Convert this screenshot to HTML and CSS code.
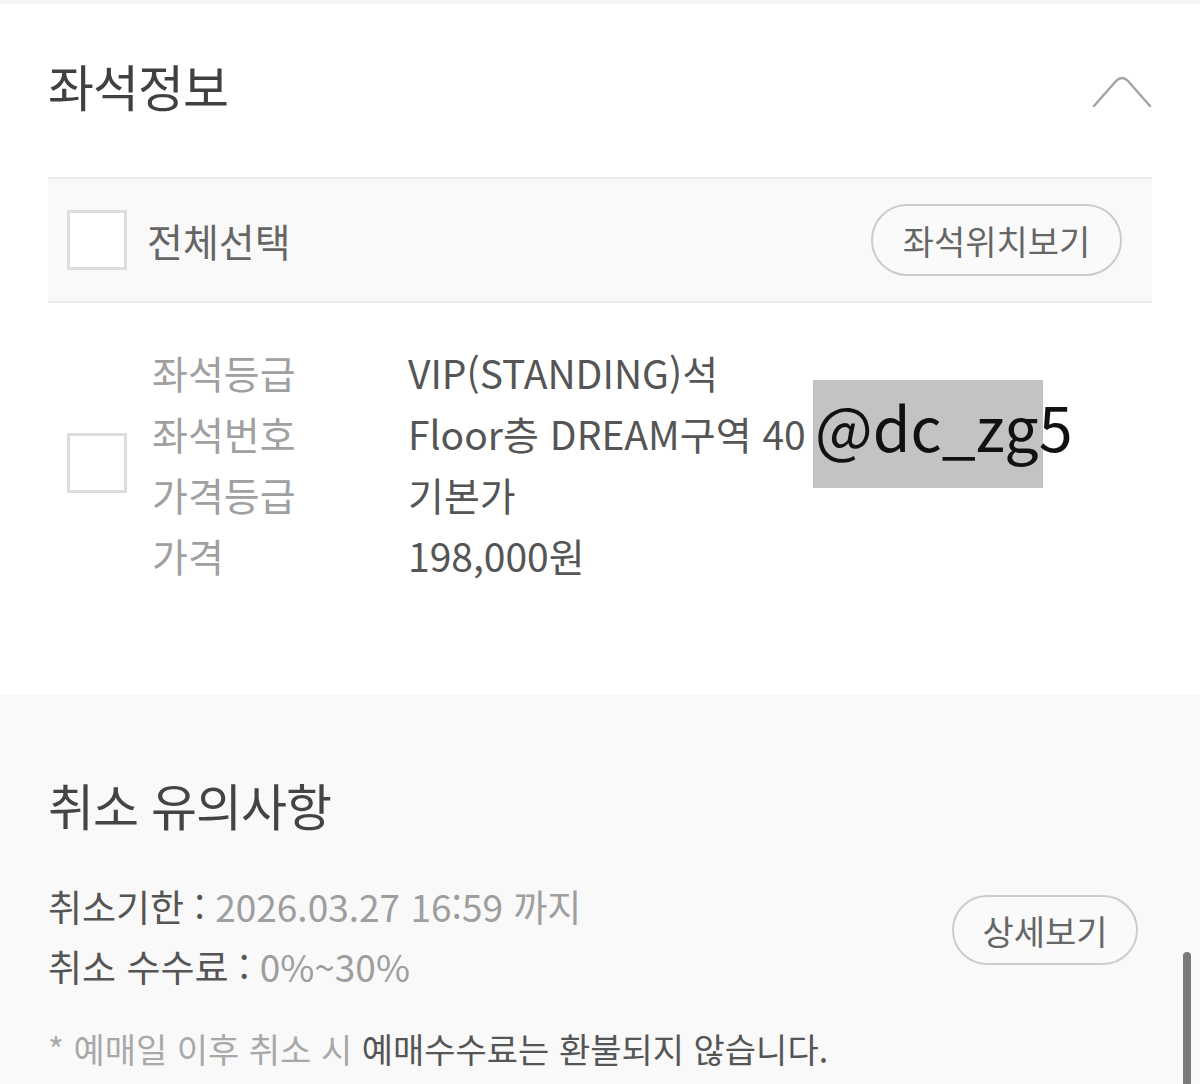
FILE: index.html
```html
<!DOCTYPE html>
<html lang="ko">
<head>
<meta charset="utf-8">
<link rel="stylesheet" href="styles.css">
</head>
<body>
<div class="page">
  <div class="topstrip"></div>
  <section class="seat">
    <div class="seat-head">
      <h2 class="title">좌석정보</h2>
      <svg class="chev" width="60" height="34" viewBox="0 0 60 34"><path d="M2 31 L24 6 Q30 0 36 6 L58 31" fill="none" stroke="#a3a3a3" stroke-width="2.4" stroke-linecap="round" stroke-linejoin="round"/></svg>
    </div>
    <div class="table-head">
      <div class="check-label">
        <span class="box"></span>
        <span class="all">전체선택</span>
      </div>
      <button class="pill pill-seat">좌석위치보기</button>
    </div>
    <div class="seat-row">
      <span class="box"></span>
      <dl class="info">
        <div class="line"><dt>좌석등급</dt><dd>VIP(STANDING)석</dd></div>
        <div class="line"><dt>좌석번호</dt><dd>Floor층 DREAM구역 40</dd></div>
        <div class="line"><dt>가격등급</dt><dd>기본가</dd></div>
        <div class="line"><dt>가격</dt><dd>198,000원</dd></div>
      </dl>
    </div>
    <div class="mark"><span>@dc_zg5</span></div>
  </section>
  <section class="cancel">
    <h2 class="title">취소 유의사항</h2>
    <div class="cancel-body">
      <div class="terms">
        <p class="term"><span class="k">취소기한 :</span> <span class="v">2026.03.27 16:59 까지</span></p>
        <p class="term"><span class="k">취소 수수료 :</span> <span class="v">0%~30%</span></p>
      </div>
      <button class="pill pill-detail">상세보기</button>
    </div>
    <p class="note"><span class="light">* 예매일 이후 취소 시 </span>예매수수료는 환불되지 않습니다.</p>
  </section>
  <div class="scrollbar"></div>
</div>
</body>
</html>
```

FILE: styles.css
```css
* { box-sizing: border-box; }
html, body { margin: 0; padding: 0; }
body {
  width: 1200px;
  height: 1084px;
  overflow: hidden;
  background: #ffffff;
  font-family: "Noto Sans CJK KR", "Noto Sans", sans-serif;
}
.page { position: relative; width: 1200px; height: 1084px; }
.topstrip { height: 4px; background: #f6f6f6; }

.seat { position: relative; height: 691px; padding: 0 48px; background: #fff; }
.seat-head {
  height: 173px;
  display: flex;
  justify-content: space-between;
  align-items: center;
  padding-bottom: 12px;
}
.title {
  margin: 0;
  font-size: 50px;
  font-weight: 400;
  color: #404040;
  letter-spacing: -1px;
  line-height: 1;
}
.chev { margin-top: 14px; }

.table-head {
  height: 126px;
  background: #f9f9f9;
  border-top: 2px solid #ececec;
  border-bottom: 2px solid #ececec;
  display: flex;
  justify-content: space-between;
  align-items: center;
  padding: 0 30px 0 19px;
}
.check-label { display: flex; align-items: center; gap: 20px; }
.box {
  width: 60px;
  height: 60px;
  border: 3px solid #dddddd;
  background: #fff;
  flex: none;
}
.all { font-size: 39px; color: #666; }

.pill {
  font-family: inherit;
  background: #fafafa;
  border: 2px solid #cccccc;
  border-radius: 40px;
  color: #666;
  font-size: 34px;
  padding: 0;
}
.pill-seat { width: 251px; height: 72px; }
.pill-detail { width: 186px; height: 70px; margin-top: 19px; margin-right: 14px; }

.seat-row {
  display: flex;
  align-items: center;
  gap: 25px;
  padding: 38px 0 0 19px;
}
.info { margin: 0; }
.line { display: flex; height: 61px; align-items: center; }
dt {
  width: 256px;
  font-size: 39px;
  color: #a0a0a0;
}
dd {
  margin: 0;
  font-size: 39px;
  color: #555;
}

.mark {
  position: absolute;
  left: 813px;
  top: 376px;
  width: 230px;
  height: 108px;
  background: #c3c3c3;
  display: flex;
  align-items: center;
}
.mark span {
  font-size: 61px;
  color: #111;
  white-space: nowrap;
  margin-top: -18px;
  margin-left: 2px;
}

.cancel {
  height: 389px;
  background: #f9f9f9;
  padding: 84px 48px 0 48px;
}
.cancel .title { color: #444; }
.cancel-body {
  display: flex;
  justify-content: space-between;
  align-items: flex-start;
  margin-top: 47px;
}
.terms { display: flex; flex-direction: column; }
.term {
  margin: 0;
  height: 60px;
  line-height: 60px;
  font-size: 37px;
}
.term .k { color: #555; }
.term .v { color: #9e9e9e; }
.note {
  margin: 28px 0 0 0;
  font-size: 34px;
  color: #555;
}
.note .light { color: #a8a8a8; }

.scrollbar {
  position: absolute;
  left: 1183px;
  top: 952px;
  width: 8px;
  bottom: 0;
  background: #7a7a7a;
  border-radius: 4px 4px 0 0;
}
```
